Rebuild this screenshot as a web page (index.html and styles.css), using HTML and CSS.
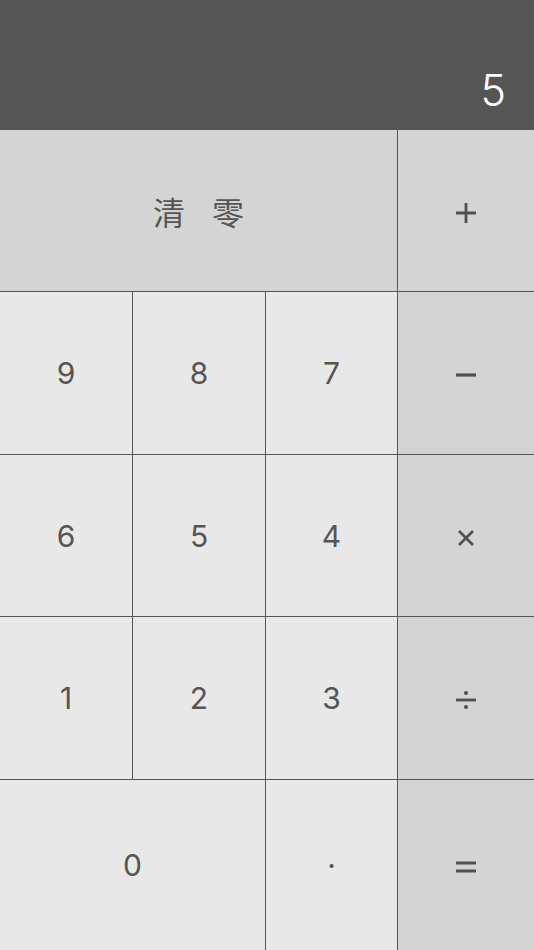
FILE: index.html
```html
<!DOCTYPE html>
<html lang="zh">
<head>
<meta charset="utf-8">
<title>计算器</title>
<link rel="stylesheet" href="styles.css">
</head>
<body>
<div class="calc">
  <div class="display"><span class="value">5</span></div>
  <div class="keys">
    <div class="key clear wide3 op-bg"><span class="cjk">清</span><span class="cjk">零</span></div>
    <div class="key op op-bg last">
      <svg width="20" height="20" viewBox="0 0 20 20"><path d="M10 0V20M0 10H20" stroke="#505050" stroke-width="2.8" fill="none"/></svg>
    </div>
    <div class="key num">9</div>
    <div class="key num">8</div>
    <div class="key num">7</div>
    <div class="key op op-bg last">
      <svg width="20" height="4" viewBox="0 0 20 4"><path d="M0 2H20" stroke="#505050" stroke-width="3.2" fill="none"/></svg>
    </div>
    <div class="key num">6</div>
    <div class="key num">5</div>
    <div class="key num">4</div>
    <div class="key op op-bg last">
      <svg width="16" height="16" viewBox="0 0 16 16"><path d="M1 1L15 15M15 1L1 15" stroke="#505050" stroke-width="2.6" fill="none"/></svg>
    </div>
    <div class="key num">1</div>
    <div class="key num">2</div>
    <div class="key num">3</div>
    <div class="key op op-bg last">
      <svg width="20" height="20" viewBox="0 0 20 20"><circle cx="10" cy="3" r="2.1" fill="#505050"/><path d="M0 10H20" stroke="#505050" stroke-width="2.8" fill="none"/><circle cx="10" cy="17" r="2.1" fill="#505050"/></svg>
    </div>
    <div class="key num zero">0</div>
    <div class="key num">·</div>
    <div class="key op op-bg last equal">
      <svg width="20" height="12" viewBox="0 0 20 12"><path d="M0 2H20M0 10H20" stroke="#505050" stroke-width="2.8" fill="none"/></svg>
    </div>
  </div>
</div>
</body>
</html>
```
FILE: styles.css
```css
html, body {
  margin: 0;
  padding: 0;
  background: #e8e8e8;
}
.calc {
  width: 534px;
  height: 950px;
  display: flex;
  flex-direction: column;
  font-family: Inter, "Noto Sans", "Noto Sans CJK SC", sans-serif;
  color: #555;
}
.display {
  height: 130px;
  background: #555555;
  display: flex;
  justify-content: flex-end;
  align-items: flex-end;
  padding: 0 28px 18px 0;
  box-sizing: border-box;
}
.value {
  color: #fff;
  font-size: 43px;
  font-weight: 300;
  line-height: 1;
}
.keys {
  flex: 1;
  display: grid;
  grid-template-columns: 133px 133px 132px 1fr;
  grid-template-rows: 162px 163px 162px 163px 1fr;
}
.key {
  display: flex;
  align-items: center;
  justify-content: center;
  box-sizing: border-box;
  border-right: 1px solid #575757;
  border-bottom: 1px solid #575757;
  background: #e8e8e8;
}
.key.last {
  border-right: none;
}
.num {
  font-size: 30px;
  font-weight: 400;
}
.op-bg {
  background: #d4d4d4;
}
.wide3 {
  grid-column: span 3;
}
.zero {
  grid-column: span 2;
}
.keys .key:nth-last-child(-n+3) {
  border-bottom: none;
}
.keys .equal {
  border-bottom: 1px solid #575757;
  border-left: 1px solid #575757;
  margin-left: -1px;
}
.clear {
  gap: 27px;
  padding-top: 1px;
}
.cjk {
  font-family: "Noto Sans CJK SC", sans-serif;
  font-size: 32px;
  font-weight: 400;
  line-height: 1;
}
.op svg {
  display: block;
}
.op {
  padding-top: 4px;
}
```
